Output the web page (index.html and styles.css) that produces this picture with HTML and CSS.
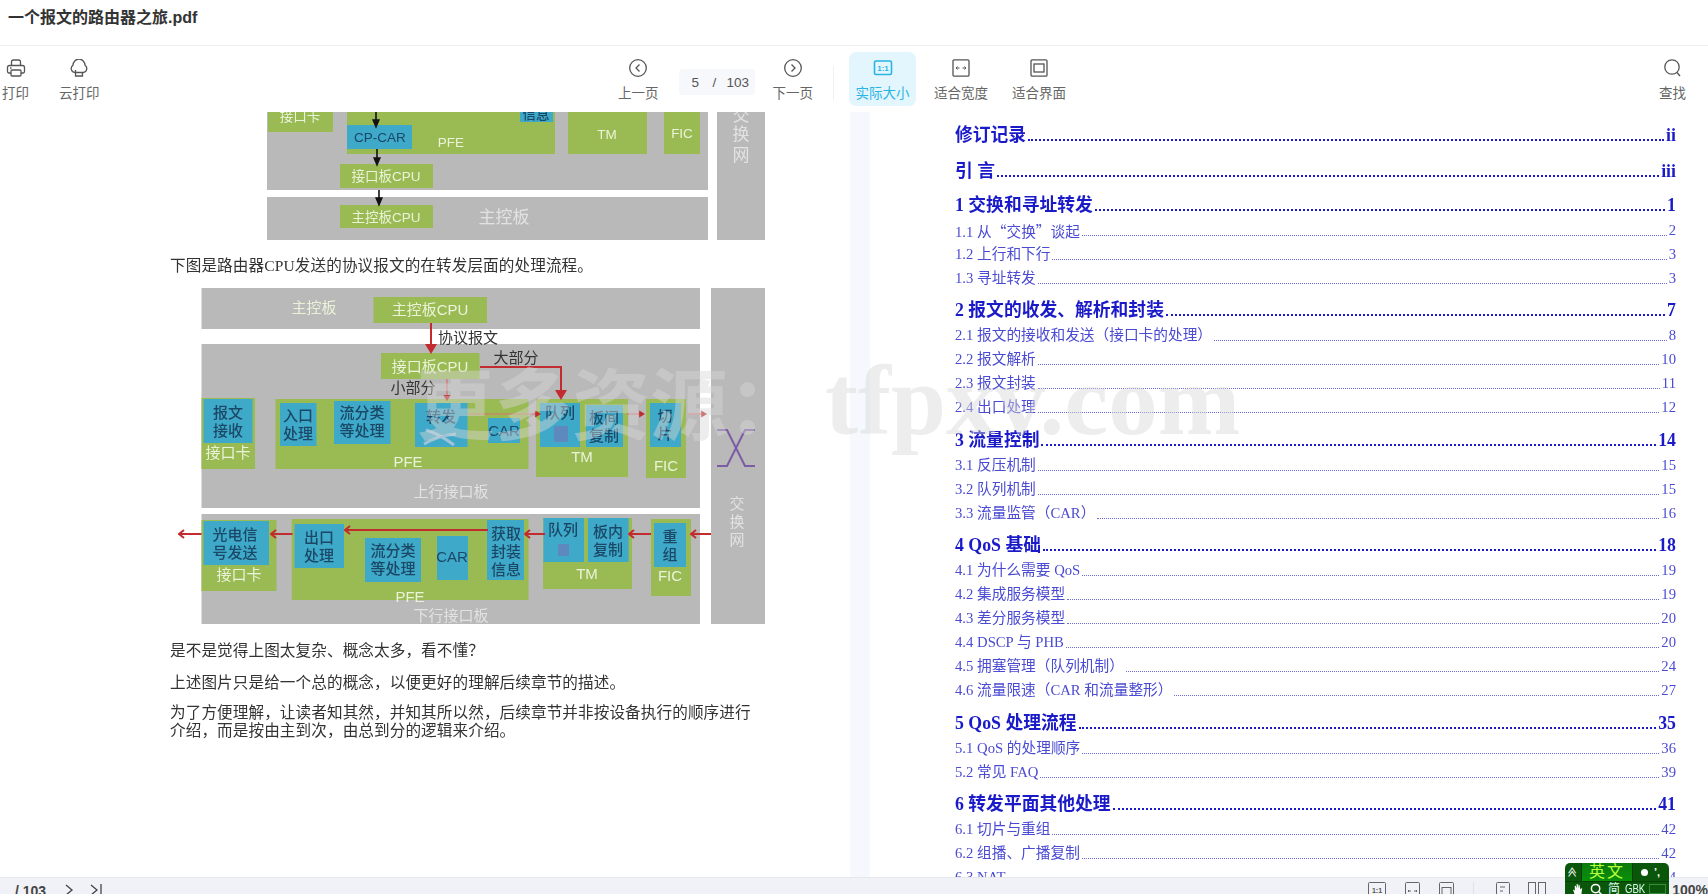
FILE: index.html
```html
<!DOCTYPE html>
<html lang="zh-CN">
<head>
<meta charset="utf-8">
<title>一个报文的路由器之旅.pdf</title>
<link rel="stylesheet" href="styles.css">
</head>
<body>
<header class="titlebar">一个报文的路由器之旅.pdf</header>

<nav class="toolbar">
  <div class="tool-left">
    <div class="tool tool-print">
      <svg class="icon" viewBox="0 0 20 18"><path d="M5.500 6.500V3a2 2 0 0 1 2-2h5a2 2 0 0 1 2 2v3.500M5 14H3a1.500 1.500 0 0 1-1.500-1.500v-4.500A2 2 0 0 1 3.500 6.500h13a2 2 0 0 1 2 2v4A1.500 1.500 0 0 1 17 14h-2"/><rect x="5" y="11" width="10" height="6" rx="1"/><path d="M4 9h1.500"/></svg>
      <span>打印</span>
    </div>
    <div class="tool tool-cloud">
      <svg class="icon" viewBox="0 0 20 18"><path d="M6 13.500a4 4 0 0 1-2-7.300 6 6 0 0 1 12 0 4 4 0 0 1-2 7.300z"/><path d="M6.500 13.500V17h7v-3.500M6.500 11v2.500"/></svg>
      <span>云打印</span>
    </div>
  </div>
  <div class="tool-center">
    <div class="tool">
      <svg class="icon" viewBox="0 0 20 18"><circle cx="10" cy="9" r="8.300"/><path d="M11.500 5.500 8 9l3.500 3.500"/></svg>
      <span>上一页</span>
    </div>
    <div class="pagebox"><span class="pg-cur">5</span><span class="pg-sep">/</span><span>103</span></div>
    <div class="tool tool-next">
      <svg class="icon" viewBox="0 0 20 18"><circle cx="10" cy="9" r="8.300"/><path d="M8.500 5.500 12 9l-3.500 3.500"/></svg>
      <span>下一页</span>
    </div>
    <div class="tool-divider"></div>
    <div class="tool tool-active">
      <svg class="icon" viewBox="0 0 20 18"><rect x="1.500" y="2" width="17" height="13.500" rx="1.500"/><text class="one-one" x="10" y="11.500">1:1</text></svg>
      <span>实际大小</span>
    </div>
    <div class="tool tool-width">
      <svg class="icon" viewBox="0 0 20 18"><rect x="2" y="0.800" width="16" height="16.400" rx="1.200"/><path class="thin" d="M5 9h3.500M11.500 9H15M6.500 7.500 5 9l1.500 1.500M13.500 7.500 15 9l-1.500 1.500"/></svg>
      <span>适合宽度</span>
    </div>
    <div class="tool tool-fit">
      <svg class="icon" viewBox="0 0 20 18"><rect x="2" y="0.800" width="16" height="16.400" rx="1.200"/><rect x="5" y="5" width="10" height="8"/></svg>
      <span>适合界面</span>
    </div>
  </div>
  <div class="tool-right">
    <div class="tool">
      <svg class="icon" viewBox="0 0 20 18"><circle cx="9" cy="8" r="7.200"/><path d="m14 13.500 3 3.500"/></svg>
      <span>查找</span>
    </div>
  </div>
</nav>

<main class="viewer">
  <section class="page page-left">
    <svg class="figure fig-a" viewBox="0 112 850 128" aria-label="接口板与主控板结构图">
      <defs>
        <marker id="blk" markerWidth="6" markerHeight="6" refX="3" refY="3" orient="auto"><path d="M0 0.500 6 3 0 5.500z" fill="#111"/></marker>
      </defs>
      <rect class="s" x="267" y="100" width="441" height="90"/>
      <rect class="s" x="267" y="197" width="441" height="43"/>
      <rect class="s" x="717" y="100" width="48" height="140"/>
      <rect class="g" x="268" y="100" width="65" height="32"/>
      <rect class="g" x="347" y="100" width="208" height="54"/>
      <rect class="b" x="520" y="100" width="33" height="22"/>
      <rect class="b" x="347" y="125" width="65" height="24"/>
      <rect class="g" x="568" y="100" width="79" height="54"/>
      <rect class="g" x="664" y="100" width="36" height="54"/>
      <rect class="g" x="340" y="164" width="93" height="24"/>
      <rect class="g" x="340" y="205" width="93" height="23"/>
      <path class="black-arrow" d="M376 112v12" marker-end="url(#blk)"/>
      <path class="black-arrow" d="M377 149v13" marker-end="url(#blk)"/>
      <path class="black-arrow" d="M379 190v12" marker-end="url(#blk)"/>
      <text class="tw sm" x="300" y="116">接口卡</text>
      <text class="td sm" x="536" y="114">信息</text>
      <text class="td sm" x="380" y="137">CP-CAR</text>
      <text class="tw sm" x="451" y="142">PFE</text>
      <text class="tw sm" x="607" y="134">TM</text>
      <text class="tw sm" x="682" y="133">FIC</text>
      <text class="tw sm" x="386" y="176">接口板CPU</text>
      <text class="tw sm" x="386" y="217">主控板CPU</text>
      <text class="tg lg" x="504" y="217">主控板</text>
      <text class="tg lg" x="741" y="115">交</text>
      <text class="tg lg" x="741" y="134">换</text>
      <text class="tg lg" x="741" y="155">网</text>
    </svg>

    <p class="para para-first">下图是路由器CPU发送的协议报文的在转发层面的处理流程。</p>

    <svg class="figure fig-b" viewBox="0 288 850 336" aria-label="协议报文转发流程图">
      <defs>
        <marker id="red" markerWidth="5" markerHeight="6" refX="4" refY="3" orient="auto"><path d="M0 0 5 3 0 6z" fill="#c22b2f"/></marker>
        <marker id="redb" markerUnits="userSpaceOnUse" markerWidth="9" markerHeight="10" refX="8" refY="5" orient="auto"><path d="M3 1 8 5 3 9" fill="none" stroke="#c22b2f" stroke-width="2"/></marker>
      </defs>
      <rect class="s" x="201.500" y="288" width="498.500" height="41"/>
      <rect class="s" x="201.500" y="344" width="498.500" height="164"/>
      <rect class="s" x="201.500" y="514" width="498.500" height="110"/>
      <rect class="s" x="711" y="288" width="54" height="336"/>

      <rect class="g" x="373.500" y="297" width="113.500" height="26"/>
      <rect class="g" x="381" y="353" width="98.500" height="26"/>
      <rect class="g" x="201.500" y="398" width="53.500" height="71"/>
      <rect class="g" x="275.500" y="399" width="253" height="70"/>
      <rect class="g" x="536" y="399" width="92" height="78"/>
      <rect class="g" x="646" y="399" width="40" height="79"/>
      <rect class="b" x="203.500" y="399" width="49" height="44"/>
      <rect class="b" x="280" y="403" width="36.500" height="43"/>
      <rect class="b" x="334" y="401" width="56.500" height="43"/>
      <rect class="b" x="415" y="403" width="52.500" height="44"/>
      <rect class="b" x="488" y="418" width="32" height="25"/>
      <rect class="b" x="540" y="403" width="40" height="44"/>
      <rect class="b" x="586" y="405" width="37" height="42"/>
      <rect class="b" x="650" y="403" width="31" height="44"/>
      <path class="haze" d="M424 444c10-6 22-9 32-10M426 430c10 3 20 9 28 15"/>
      <rect class="blob" x="554" y="426" width="14" height="16"/>

      <rect class="g" x="201.500" y="520" width="75" height="71"/>
      <rect class="g" x="291.700" y="519" width="236.800" height="81"/>
      <rect class="g" x="543" y="518" width="89" height="71"/>
      <rect class="g" x="651" y="519" width="40" height="77"/>
      <rect class="b" x="203.500" y="521" width="65.500" height="44"/>
      <rect class="b" x="294.500" y="524" width="49.500" height="44"/>
      <rect class="b" x="365" y="538" width="56" height="44"/>
      <rect class="b" x="437" y="536" width="31" height="44"/>
      <rect class="b" x="487" y="520" width="37" height="60"/>
      <rect class="b" x="543.500" y="518" width="40.500" height="44"/>
      <rect class="b" x="588" y="518" width="40.600" height="44"/>
      <rect class="b" x="654" y="523" width="32" height="44"/>
      <rect class="blob" x="558" y="544" width="11" height="12"/>

      <path class="red" d="M431 323v29" marker-end="url(#red)"/>
      <path class="red" d="M480 367h81v31" marker-end="url(#red)"/>
      <path class="red-thin" d="M447 379v21" marker-end="url(#red)"/>
      <path class="red-thin" d="M468 414h72" marker-end="url(#red)"/>
      <path class="red-thin" d="M627 414h17" marker-end="url(#red)"/>
      <path class="red-thin" d="M688 414h18" marker-end="url(#red)"/>
      <path class="red" d="M711 534h-20" marker-end="url(#redb)"/>
      <path class="red" d="M651 534h-22" marker-end="url(#redb)"/>
      <path class="red" d="M545 534h-20" marker-end="url(#redb)"/>
      <path class="red" d="M488 530H345" marker-end="url(#redb)"/>
      <path class="red" d="M292.500 534H271" marker-end="url(#redb)"/>
      <path class="red" d="M201.500 534H179" marker-end="url(#redb)"/>
      <path class="purple" d="M717 430h10l18 36h10M755 430h-10l-18 36h-10"/>

      <text class="tw" x="314" y="307">主控板</text>
      <text class="tw" x="430" y="309">主控板CPU</text>
      <text class="tk" x="468" y="337">协议报文</text>
      <text class="tw" x="430" y="366">接口板CPU</text>
      <text class="tk" x="516" y="357">大部分</text>
      <text class="tk" x="413" y="387">小部分</text>

      <text class="td" x="228" y="412">报文</text><text class="td" x="228" y="430">接收</text>
      <text class="tw" x="228" y="452">接口卡</text>
      <text class="td" x="298" y="415">入口</text><text class="td" x="298" y="433">处理</text>
      <text class="td" x="362" y="412">流分类</text><text class="td" x="362" y="430">等处理</text>
      <text class="td" x="441" y="416">转发</text>
      <text class="td" x="504" y="430">CAR</text>
      <text class="tw" x="408" y="461">PFE</text>
      <text class="td" x="560" y="412">队列</text>
      <text class="td" x="604" y="417">板间</text><text class="td" x="604" y="435">复制</text>
      <text class="tw" x="582" y="456">TM</text>
      <text class="td" x="665" y="415">切</text><text class="td" x="665" y="433">片</text>
      <text class="tw" x="666" y="465">FIC</text>
      <text class="tg" x="451" y="491">上行接口板</text>

      <text class="td" x="235" y="534">光电信</text><text class="td" x="235" y="552">号发送</text>
      <text class="tw" x="239" y="574">接口卡</text>
      <text class="td" x="319" y="537">出口</text><text class="td" x="319" y="555">处理</text>
      <text class="td" x="393" y="550">流分类</text><text class="td" x="393" y="568">等处理</text>
      <text class="td" x="452" y="556">CAR</text>
      <text class="td" x="506" y="533">获取</text><text class="td" x="506" y="551">封装</text><text class="td" x="506" y="569">信息</text>
      <text class="tw" x="410" y="596">PFE</text>
      <text class="td" x="563" y="529">队列</text>
      <text class="td" x="608" y="531">板内</text><text class="td" x="608" y="549">复制</text>
      <text class="tw" x="587" y="573">TM</text>
      <text class="td" x="670" y="536">重</text><text class="td" x="670" y="554">组</text>
      <text class="tw" x="670" y="575">FIC</text>
      <text class="tg" x="451" y="615">下行接口板</text>
      <text class="tg" x="737" y="503">交</text><text class="tg" x="737" y="521">换</text><text class="tg" x="737" y="539">网</text>
    </svg>

    <p class="para para-q">是不是觉得上图太复杂、概念太多，看不懂？</p>
    <p class="para para-s">上述图片只是给一个总的概念，以便更好的理解后续章节的描述。</p>
    <p class="para para-t">为了方便理解，让读者知其然，并知其所以然，后续章节并非按设备执行的顺序进行介绍，而是按由主到次，由总到分的逻辑来介绍。</p>
  </section>

  <div class="gutter"></div>

  <section class="page page-right">
    <div class="toc-row major first"><span>修订记录</span><i></i><span>ii</span></div>
    <div class="toc-row major preface"><span>引 言</span><i></i><span>iii</span></div>
    <div class="toc-row major"><span>1 交换和寻址转发</span><i></i><span>1</span></div>
    <div class="toc-row"><span>1.1 从<span class="cjk">“</span>交换<span class="cjk">”</span>谈起</span><i></i><span>2</span></div>
    <div class="toc-row"><span>1.2 上行和下行</span><i></i><span>3</span></div>
    <div class="toc-row"><span>1.3 寻址转发</span><i></i><span>3</span></div>
    <div class="toc-row major"><span>2 报文的收发、解析和封装</span><i></i><span>7</span></div>
    <div class="toc-row"><span>2.1 报文的接收和发送（接口卡的处理）</span><i></i><span>8</span></div>
    <div class="toc-row"><span>2.2 报文解析</span><i></i><span>10</span></div>
    <div class="toc-row"><span>2.3 报文封装</span><i></i><span>11</span></div>
    <div class="toc-row"><span>2.4 出口处理</span><i></i><span>12</span></div>
    <div class="toc-row major"><span>3 流量控制</span><i></i><span>14</span></div>
    <div class="toc-row"><span>3.1 反压机制</span><i></i><span>15</span></div>
    <div class="toc-row"><span>3.2 队列机制</span><i></i><span>15</span></div>
    <div class="toc-row"><span>3.3 流量监管（CAR）</span><i></i><span>16</span></div>
    <div class="toc-row major"><span>4 QoS 基础</span><i></i><span>18</span></div>
    <div class="toc-row"><span>4.1 为什么需要 QoS</span><i></i><span>19</span></div>
    <div class="toc-row"><span>4.2 集成服务模型</span><i></i><span>19</span></div>
    <div class="toc-row"><span>4.3 差分服务模型</span><i></i><span>20</span></div>
    <div class="toc-row"><span>4.4 DSCP 与 PHB</span><i></i><span>20</span></div>
    <div class="toc-row"><span>4.5 拥塞管理（队列机制）</span><i></i><span>24</span></div>
    <div class="toc-row"><span>4.6 流量限速（CAR 和流量整形）</span><i></i><span>27</span></div>
    <div class="toc-row major"><span>5 QoS 处理流程</span><i></i><span>35</span></div>
    <div class="toc-row"><span>5.1 QoS 的处理顺序</span><i></i><span>36</span></div>
    <div class="toc-row"><span>5.2 常见 FAQ</span><i></i><span>39</span></div>
    <div class="toc-row major"><span>6 转发平面其他处理</span><i></i><span>41</span></div>
    <div class="toc-row"><span>6.1 切片与重组</span><i></i><span>42</span></div>
    <div class="toc-row"><span>6.2 组播、广播复制</span><i></i><span>42</span></div>
    <div class="toc-row"><span>6.3 NAT</span><i></i><span>44</span></div>
  </section>

  <div class="watermark"><span class="wm-cn">更多资源：</span><span class="wm-en">tfpxv.com</span></div>
</main>

<footer class="statusbar">
  <div class="status-left">
    <b class="status-total">/ 103</b>
    <svg class="s-chev" viewBox="0 0 10 12"><path d="m2 1 6 5-6 5"/></svg>
    <svg class="s-last" viewBox="0 0 14 12"><path d="m2 1 6 5-6 5M12 0v12"/></svg>
  </div>
  <div class="status-right">
    <svg class="s-icon s-w18" viewBox="0 0 18 18"><rect x="0.500" y="0.500" width="17" height="17" rx="1"/><text class="one-one-s" x="9" y="11">1:1</text></svg>
    <svg class="s-icon s-w15" viewBox="0 0 15 18"><rect x="0.500" y="0.500" width="14" height="17" rx="1"/><path d="M3 9h3M9 9h3M4 8 3 9l1 1M11 8l1 1-1 1"/></svg>
    <svg class="s-icon s-w15" viewBox="0 0 15 18"><rect x="0.500" y="0.500" width="14" height="17" rx="1"/><rect x="3" y="5.500" width="9" height="7"/></svg>
    <div class="s-divider"></div>
    <svg class="s-icon s-w14" viewBox="0 0 14 18"><rect x="0.500" y="0.500" width="13" height="17" rx="1"/><path d="M4 5h5M4 9h3"/></svg>
    <svg class="s-icon s-w18" viewBox="0 0 18 18"><rect x="0.500" y="0.500" width="7" height="17"/><rect x="10.500" y="0.500" width="7" height="17"/></svg>
    <b class="status-zoom">100%</b>
  </div>
</footer>

<aside class="ime">
  <div class="ime-top">
    <div class="ime-toggle">≫</div>
    <div class="ime-mode">英文</div>
    <div class="ime-punct"><i class="ime-dot"></i><span>’,</span></div>
  </div>
  <div class="ime-bottom">
    <svg class="ime-hand" viewBox="0 0 14 14"><path d="M3 13 1 7l2 1V3h1l1 3V1h1l1 5V2h1l1 5 2-2-1 8z"/></svg>
    <svg class="ime-search" viewBox="0 0 14 14"><circle cx="6" cy="6" r="4.500"/><path d="m9.500 9.500 3.500 3.500"/></svg>
    <span>简</span>
    <span class="ime-gbk">GBK</span>
    <span class="ime-kbd"></span>
  </div>
</aside>
</body>
</html>
```

FILE: styles.css
```css
* { box-sizing: border-box; }

html, body { margin: 0; height: 100%; }

body {
  display: flex;
  flex-direction: column;
  height: 100vh;
  overflow: hidden;
  background: #fff;
  color: #333;
  font-family: "Liberation Sans", "Noto Sans CJK SC", sans-serif;
}

/* title */
.titlebar {
  flex: none;
  height: 46px;
  padding: 6px 0 0 8px;
  border-bottom: 1px solid #eceef1;
  font-size: 16px;
  font-weight: 700;
  line-height: 24px;
  color: #333;
}

/* toolbar */
.toolbar {
  flex: none;
  display: flex;
  height: 66px;
  padding-top: 6px;
  background: #fff;
}

.tool-left {
  display: flex;
  gap: 30px;
  width: 618px;
  padding-left: 2px;
}

.tool-center { display: flex; gap: 20px; }

.tool-right { margin-left: auto; padding-right: 22px; }

.tool {
  display: flex;
  flex-direction: column;
  align-items: center;
  height: 54px;
  padding-top: 7px;
  font-size: 13.500px;
  line-height: 16px;
  color: #666;
  white-space: nowrap;
}

.tool-print { width: 27px; }

.tool .icon {
  width: 20px;
  height: 18px;
  margin-bottom: 9px;
  fill: none;
  stroke: #555;
  stroke-width: 1.300;
}

.icon .thin { stroke-width: 1; }

.tool-next { margin-left: -2px; }

.tool-divider {
  width: 1px;
  height: 34px;
  margin: 14px -5px 0 0;
  background: #eef0f3;
}

.tool-active {
  width: 67px;
  border-radius: 7px;
  background: #e4f6fd;
  color: #2ab4e4;
}

.tool-active .icon { stroke: #2ab4e4; stroke-width: 1.600; }

.one-one {
  fill: #2ab4e4;
  stroke: none;
  font-size: 8px;
  font-weight: 700;
  text-anchor: middle;
}

.tool-width { margin-left: -2px; }

.tool-fit { margin-left: 4px; }

.pagebox {
  display: flex;
  align-items: center;
  width: 76px;
  height: 26px;
  margin-top: 17px;
  padding-left: 13px;
  border-radius: 4px;
  background: #f7f8fc;
  font-size: 13.500px;
  color: #555;
}

.pg-cur { width: 21px; }

.pg-sep { width: 14px; }

/* viewer */
.viewer {
  position: relative;
  flex: 1;
  display: flex;
  min-height: 0;
  overflow: hidden;
  background: #fff;
}

.page { flex: none; overflow: hidden; background: #fff; }

.page-left { width: 850px; filter: blur(0.3px); }

.gutter { flex: none; width: 20px; background: #f5f8fc; }

.page-right {
  flex: 1;
  padding: 10px 32px 0 85px;
  filter: blur(0.25px);
  font-family: "Liberation Serif", "Noto Sans CJK SC", serif;
}

/* figures */
.figure { display: block; width: 850px; }

.fig-a { height: 128px; }

.fig-b { height: 336px; }

.figure text {
  font-family: "Liberation Sans", "Noto Sans CJK SC", sans-serif;
  font-size: 15px;
  text-anchor: middle;
  dominant-baseline: central;
}

.figure text.sm { font-size: 13.500px; }

.figure text.lg { font-size: 17px; }

.s { fill: #b9b9b9; }
.g { fill: #9aba54; }
.b { fill: #3fa9c9; }

.tw { fill: #eaf3d8; }
.td { fill: #1a4866; font-weight: 500; }
.tg { fill: #e2e2e2; }
.tk { fill: #333; }

.haze { fill: none; stroke: #9fc4d8; stroke-width: 3; }

.blob { fill: #6d78b8; opacity: 0.65; }

.black-arrow { fill: none; stroke: #111; stroke-width: 1.600; }

.red { fill: none; stroke: #c22b2f; stroke-width: 2; }

.red-thin { fill: none; stroke: #d9706f; stroke-width: 1.200; }

.purple { fill: none; stroke: #7d5ba6; stroke-width: 2; }

/* paragraphs */
.para {
  margin: 0 0 0 170px;
  width: 586px;
  font-family: "Liberation Serif", "Noto Sans CJK SC", serif;
  font-size: 15.600px;
  letter-spacing: 0.1px;
  line-height: 18px;
  color: #333;
}

.para-first { margin-top: 17px; margin-bottom: 13px; white-space: nowrap; }
.para-q { margin-top: 18px; }
.para-s { margin-top: 14px; }
.para-t { margin-top: 12px; }

/* contents list */
.toc-row {
  display: flex;
  height: 24px;
  font-size: 14.700px;
  line-height: 25px;
  color: #4a4ad2;
  white-space: nowrap;
}

.toc-row i {
  flex: 1;
  height: 18px;
  margin: 0 2px;
  border-bottom: 1px dotted #6a6ad8;
}

.toc-row .cjk { font-family: "Noto Sans CJK SC", sans-serif; }

.toc-row.major {
  height: 26px;
  margin-top: 7.500px;
  font-size: 17.800px;
  font-weight: 700;
  line-height: 26px;
  color: #1a1ac8;
}

.toc-row.major i {
  height: 19px;
  border-bottom: 2px dotted #1a1ac8;
}

.toc-row.first { margin-top: 0; }

.toc-row.preface { margin-top: 10px; }

/* watermark */
.watermark {
  position: absolute;
  left: 416px;
  top: 234px;
  display: flex;
  align-items: baseline;
  font-family: "Liberation Serif", "Noto Sans CJK SC", serif;
  font-weight: 700;
  line-height: 110px;
  white-space: nowrap;
  color: rgba(215, 215, 215, 0.45);
  pointer-events: none;
}

.wm-cn { font-size: 78px; }

.wm-en { font-size: 99px; margin-left: 19px; }

/* status bar */
.statusbar {
  flex: none;
  display: flex;
  justify-content: space-between;
  height: 17px;
  overflow: hidden;
  border-top: 1px solid #e6e8ee;
  background: #f0f2f7;
  color: #444;
}

.status-left {
  display: flex;
  align-items: flex-start;
  padding: 6px 0 0 15px;
}

.status-total { font-size: 14px; line-height: 14px; }

.s-chev, .s-last {
  fill: none;
  stroke: #444;
  stroke-width: 1.300;
  height: 12px;
}

.s-chev { width: 10px; margin-left: 18px; }

.s-last { width: 14px; margin-left: 15px; }

.status-right {
  display: flex;
  align-items: flex-start;
  padding-top: 4px;
}

.s-icon {
  flex: none;
  height: 18px;
  fill: none;
  stroke: #666;
  stroke-width: 1;
}

.s-w18 { width: 18px; margin-left: 18px; }
.s-w15 { width: 15px; margin-left: 19px; }
.s-w14 { width: 14px; margin-left: 22px; }

.one-one-s {
  fill: #555;
  stroke: none;
  font-size: 7px;
  font-weight: 700;
  text-anchor: middle;
}

.s-divider {
  flex: none;
  width: 1px;
  height: 18px;
  margin-left: 19px;
  background: #dfe1e6;
}

.status-zoom {
  margin-left: 126px;
  font-size: 14px;
  line-height: 16px;
  color: #444;
}

/* input method widget */
.ime {
  position: absolute;
  left: 1565px;
  top: 863px;
  width: 104px;
  height: 31px;
  overflow: hidden;
  border-radius: 5px 5px 0 0;
  background: #0a560a;
  color: #fff;
}

.ime-top { display: flex; height: 18px; }

.ime-toggle {
  width: 16px;
  font-size: 10px;
  line-height: 18px;
  font-weight: 700;
  text-align: center;
  transform: rotate(-90deg);
}

.ime-mode {
  width: 52px;
  background: linear-gradient(#0c7a0c, #0a8f0a);
  border-left: 1px solid #053f05;
  border-right: 1px solid #053f05;
  font-size: 16px;
  line-height: 18px;
  letter-spacing: 2px;
  text-align: center;
  color: #b8ff3c;
}

.ime-punct {
  display: flex;
  align-items: center;
  gap: 6px;
  padding-left: 8px;
  font-size: 11px;
  font-weight: 700;
}

.ime-dot {
  width: 7px;
  height: 7px;
  border-radius: 50%;
  background: #fff;
}

.ime-bottom {
  display: flex;
  align-items: flex-start;
  gap: 5px;
  height: 13px;
  padding: 1px 0 0 7px;
  border-top: 1px solid #053f05;
  font-size: 12px;
  line-height: 13px;
  color: #dfe;
}

.ime-hand { flex: none; width: 13px; height: 13px; fill: #fff; }

.ime-search {
  flex: none;
  width: 13px;
  height: 13px;
  fill: none;
  stroke: #fff;
  stroke-width: 1.600;
}

.ime-gbk {
  margin-right: -6px;
  transform: scaleX(0.8);
  transform-origin: left center;
}

.ime-kbd {
  flex: none;
  width: 17px;
  height: 10px;
  margin-top: 1px;
  border: 1px solid #3a8a3a;
}
```
